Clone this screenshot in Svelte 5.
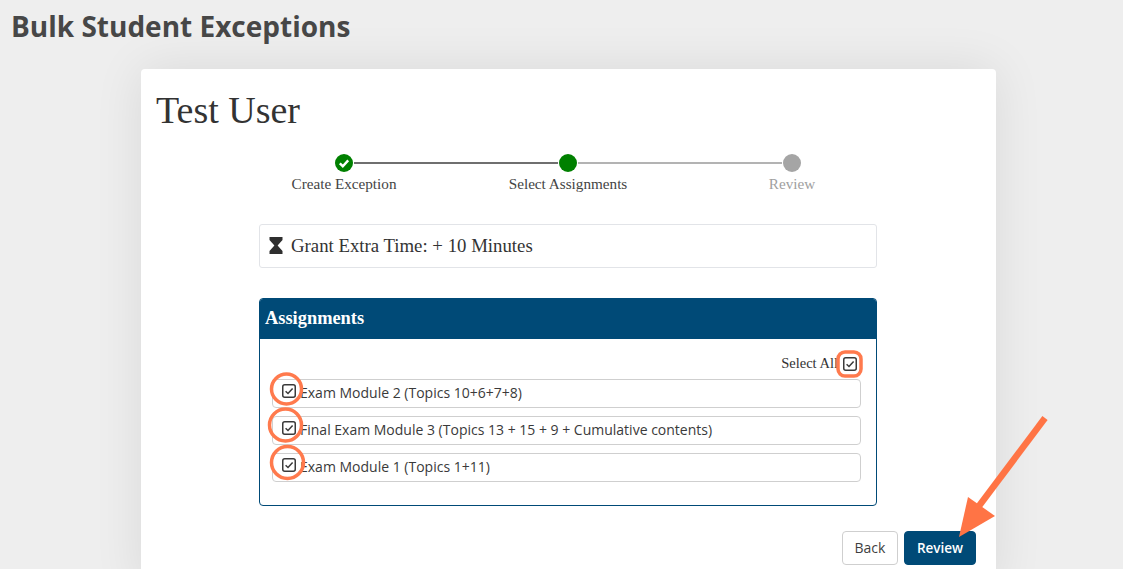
<script>
  const steps = [
    { label: 'Create Exception', state: 'done' },
    { label: 'Select Assignments', state: 'active' },
    { label: 'Review', state: 'todo' },
  ]

  const assignments = [
    'Exam Module 2 (Topics 10+6+7+8)',
    'Final Exam Module 3 (Topics 13 + 15 + 9 + Cumulative contents)',
    'Exam Module 1 (Topics 1+11)',
  ]
</script>

{#snippet checkbox()}
  <svg class="check" width="14" height="14" viewBox="0 0 14 14" aria-hidden="true">
    <rect x="0.75" y="0.75" width="12.5" height="12.5" rx="2" fill="none" stroke="#3a3a3a" stroke-width="1.5" />
    <path d="M3.6 7.2 L6 9.5 L10.6 4.4" fill="none" stroke="#3a3a3a" stroke-width="1.5" />
  </svg>
{/snippet}

<div class="page">
  <h1>Bulk Student Exceptions</h1>

  <div class="card">
    <h2>Test User</h2>

    <div class="stepper">
      {#each steps as step, i}
        <div class="step {step.state}">
          <div class="track">
            {#if i > 0}<span class="line left" class:dark={i === 1}></span>{/if}
            <span class="dot">
              {#if step.state === 'done'}
                <svg width="18" height="18" viewBox="0 0 18 18" aria-hidden="true">
                  <path d="M4.8 9.4 L7.8 12.2 L13.2 6.4" fill="none" stroke="#fff" stroke-width="2.4" />
                </svg>
              {/if}
            </span>
            {#if i < 2}<span class="line right" class:dark={i === 0}></span>{/if}
          </div>
          <div class="label">{step.label}</div>
        </div>
      {/each}
    </div>

    <div class="content">
      <div class="grant">
        <svg width="14" height="17" viewBox="0 0 14 17" aria-hidden="true">
          <path d="M0.5 0 H13.5 V3 L8.6 8.5 L13.5 14 V17 H0.5 V14 L5.4 8.5 L0.5 3 Z" fill="#2f2f2f" />
        </svg>
        <span>Grant Extra Time: + 10 Minutes</span>
      </div>

      <section class="panel">
        <header>Assignments</header>
        <div class="panel-body">
          <div class="select-all">
            <span>Select All</span>
            {@render checkbox()}
          </div>
          {#each assignments as name}
            <div class="row">
              {@render checkbox()}
              <span>{name}</span>
            </div>
          {/each}
        </div>
      </section>

      <div class="actions">
        <button class="back">Back</button>
        <button class="review">Review</button>
      </div>
    </div>
  </div>

  <svg class="marks" width="1123" height="569" viewBox="0 0 1123 569" aria-hidden="true">
    <g fill="none" stroke="#ff7a4d" stroke-width="3.500">
      <rect x="838" y="352" width="23" height="24" rx="7" />
      <circle cx="286.500" cy="389" r="15" />
      <circle cx="285.500" cy="425" r="16" />
      <circle cx="287.500" cy="462.500" r="16" />
    </g>
    <path d="M1045 418 L976 510" stroke="#ff7445" stroke-width="6.500" />
    <path d="M968 497 L995 516 L959 537 Z" fill="#ff7445" />
  </svg>
</div>

<style>
  :global(body) {
    margin: 0;
    background: #eeeeee;
  }

  .page {
    position: relative;
    height: 569px;
    overflow: hidden;
    background: #eeeeee;
  }

  h1 {
    margin: 0;
    padding: 8px 0 0 11px;
    height: 69px;
    box-sizing: border-box;
    font-family: 'Open Sans', sans-serif;
    font-weight: 700;
    font-size: 28px;
    line-height: 36px;
    color: #474747;
  }

  .card {
    width: 855px;
    height: 520px;
    margin-left: 141px;
    box-sizing: border-box;
    padding: 18px 16px 0 15px;
    background: #fff;
    border-radius: 4px;
    box-shadow: 0 0 50px rgba(0, 0, 0, 0.09);
    font-family: 'Liberation Serif', serif;
    color: #333;
  }

  h2 {
    margin: 0;
    font-weight: 400;
    font-size: 38px;
    line-height: 46px;
    color: #333;
  }

  .stepper {
    display: grid;
    grid-template-columns: repeat(3, 224px);
    justify-content: center;
    margin-top: 21px;
  }

  .step {
    text-align: center;
  }

  .track {
    position: relative;
    height: 18px;
    display: flex;
    justify-content: center;
  }

  .dot {
    width: 18px;
    height: 18px;
    border-radius: 50%;
    background: #008000;
  }

  .todo .dot {
    background: #a5a5a5;
  }

  .line {
    position: absolute;
    top: 8px;
    height: 2px;
    background: #b3b3b3;
  }

  .line.dark {
    background: #6f6f6f;
  }

  .line.right {
    left: 122px;
    right: 0;
  }

  .line.left {
    left: 0;
    right: 122px;
  }

  .label {
    margin-top: 3px;
    font-size: 15.200px;
    line-height: 18px;
    color: #444;
  }

  .todo .label {
    color: #a0a0a0;
  }

  .content {
    width: 618px;
    margin: 31px auto 0;
  }

  .grant {
    height: 44px;
    box-sizing: border-box;
    display: flex;
    align-items: center;
    gap: 8px;
    padding: 0 0 1px 9px;
    border: 1px solid #e2e4e8;
    border-radius: 3px;
    font-size: 18.800px;
    color: #333;
  }

  .panel {
    margin-top: 30px;
    height: 208px;
    box-sizing: border-box;
    border: 1px solid #004a77;
    border-radius: 4px;
    overflow: hidden;
  }

  .panel header {
    height: 40px;
    padding-left: 5px;
    background: #004a77;
    color: #fff;
    font-weight: 700;
    font-size: 18.400px;
    line-height: 39px;
  }

  .panel-body {
    padding: 0 15px 0 12px;
  }

  .select-all {
    display: flex;
    justify-content: flex-end;
    align-items: center;
    gap: 5px;
    height: 40px;
    padding: 11px 4px 2px 0;
    box-sizing: border-box;
    font-size: 14.500px;
    color: #333;
  }

  .row {
    display: flex;
    align-items: center;
    gap: 4px;
    height: 29px;
    box-sizing: border-box;
    margin-bottom: 8px;
    padding: 0 0 2px 9px;
    border: 1px solid #cfcfcf;
    border-radius: 4px;
    font-family: 'Open Sans', sans-serif;
    font-size: 14px;
    color: #3a3a3a;
  }

  .row .check {
    margin-top: -4px;
  }

  .select-all .check {
    flex: none;
  }

  .actions {
    display: flex;
    justify-content: flex-end;
    gap: 6px;
    margin: 25px -99px 0 0;
  }

  button {
    height: 34px;
    box-sizing: border-box;
    padding-bottom: 2px;
    border-radius: 4px;
    font-family: 'Open Sans', sans-serif;
    font-size: 14px;
  }

  .back {
    width: 56px;
    background: #fff;
    border: 1px solid #cfcfcf;
    color: #3f3f3f;
  }

  .review {
    width: 72px;
    background: #004a77;
    border: 1px solid #004a77;
    color: #fff;
    font-size: 13.500px;
    font-weight: 600;
  }

  .marks {
    position: absolute;
    inset: 0;
    pointer-events: none;
  }
</style>
